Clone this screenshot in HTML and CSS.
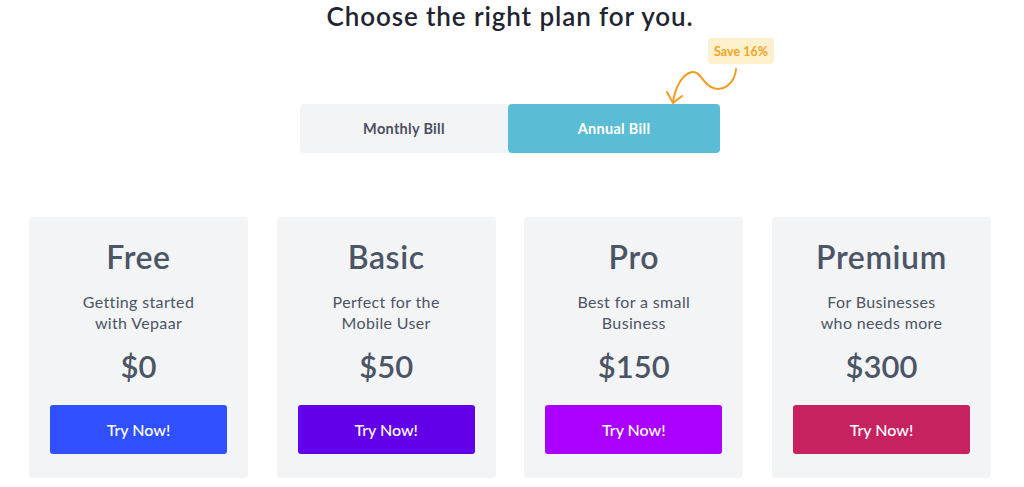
FILE: index.html
```html
<!DOCTYPE html>
<html lang="en">
<head>
<meta charset="utf-8">
<title>Pricing</title>
<link rel="stylesheet" href="styles.css">
</head>
<body>
<div class="page">
  <h1 class="heading">Choose the right plan for you.</h1>

  <div class="toggle-wrap">
    <div class="toggle">
      <button class="toggle-btn">Monthly Bill</button>
      <button class="toggle-btn active">Annual Bill</button>
    </div>
    <span class="save-badge">Save 16%</span>
    <svg class="save-arrow" width="80" height="50" viewBox="660 60 80 50" fill="none" stroke="#f39c1f" stroke-width="2" stroke-linecap="round" stroke-linejoin="round">
      <path d="M736 69 C735 84 722 93 711 87 C702 82 700 71 692 72 C682 74 675 88 673 102"/>
      <path d="M667 92 L673 103 L682 96"/>
    </svg>
  </div>

  <div class="plans">
    <div class="plan">
      <h2 class="plan-name">Free</h2>
      <p class="plan-desc">Getting started<br>with Vepaar</p>
      <p class="plan-price">$0</p>
      <button class="plan-btn btn-free">Try Now!</button>
    </div>
    <div class="plan">
      <h2 class="plan-name">Basic</h2>
      <p class="plan-desc">Perfect for the<br>Mobile User</p>
      <p class="plan-price">$50</p>
      <button class="plan-btn btn-basic">Try Now!</button>
    </div>
    <div class="plan">
      <h2 class="plan-name">Pro</h2>
      <p class="plan-desc">Best for a small<br>Business</p>
      <p class="plan-price">$150</p>
      <button class="plan-btn btn-pro">Try Now!</button>
    </div>
    <div class="plan">
      <h2 class="plan-name">Premium</h2>
      <p class="plan-desc">For Businesses<br>who needs more</p>
      <p class="plan-price">$300</p>
      <button class="plan-btn btn-premium">Try Now!</button>
    </div>
  </div>
</div>
</body>
</html>
```

FILE: styles.css
```css
* { box-sizing: border-box; }

html, body {
  margin: 0;
  padding: 0;
  background: #ffffff;
  font-family: "Lato", "Noto Sans", sans-serif;
  color: #4b5563;
}

.page {
  width: 962px;
  margin-left: 29px;
  display: flex;
  flex-direction: column;
  align-items: center;
}

.heading {
  margin: 0;
  font-size: 26px;
  line-height: 32px;
  font-weight: 600;
  color: #1f2430;
  letter-spacing: 0.9px;
}

.toggle-wrap {
  position: relative;
  margin-top: 72px;
}

.toggle {
  display: flex;
  width: 420px;
  height: 49px;
  background: #f3f4f6;
  border-radius: 4px;
}

.toggle-btn {
  width: 208px;
  border: 0;
  background: transparent;
  font-family: inherit;
  font-size: 14.5px;
  font-weight: 700;
  letter-spacing: 0.3px;
  color: #4b5060;
  border-radius: 4px;
  padding: 0;
}

.toggle-btn.active {
  width: 212px;
  background: #5bbcd6;
  color: #ffffff;
}

.save-badge {
  position: absolute;
  left: 408px;
  top: -66px;
  width: 66px;
  height: 26px;
  display: flex;
  align-items: center;
  justify-content: center;
  background: #fdf0cc;
  color: #f5a327;
  font-size: 12.5px;
  font-weight: 700;
  border-radius: 4px;
}

.save-arrow {
  position: absolute;
  left: 360px;
  top: -44px;
}

.plans {
  margin-top: 64px;
  width: 100%;
  display: grid;
  grid-template-columns: repeat(4, 219px);
  justify-content: space-between;
}

.plan {
  height: 261px;
  background: #f3f4f6;
  border-radius: 4px;
  padding: 20px 21px 0;
  display: flex;
  flex-direction: column;
  align-items: center;
  text-align: center;
}

.plan-name {
  margin: 0;
  font-size: 32px;
  line-height: 40px;
  font-weight: 600;
  letter-spacing: 0.6px;
  color: #4b5565;
}

.plan-desc {
  margin: 14px 0 0;
  font-size: 16px;
  line-height: 21px;
  letter-spacing: 0.35px;
  color: #4b5565;
}

.plan-price {
  margin: 14px 0 0;
  font-size: 31px;
  line-height: 38px;
  font-weight: 600;
  color: #4b5565;
}

.plan-btn {
  margin-top: 20px;
  width: 100%;
  height: 49px;
  border: 0;
  border-radius: 3px;
  color: #ffffff;
  font-family: inherit;
  font-size: 16px;
  font-weight: 500;
}

.btn-free { background: #304ffe; }
.btn-basic { background: #6200ea; }
.btn-pro { background: #aa00ff; }
.btn-premium { background: #c5225f; }
```
